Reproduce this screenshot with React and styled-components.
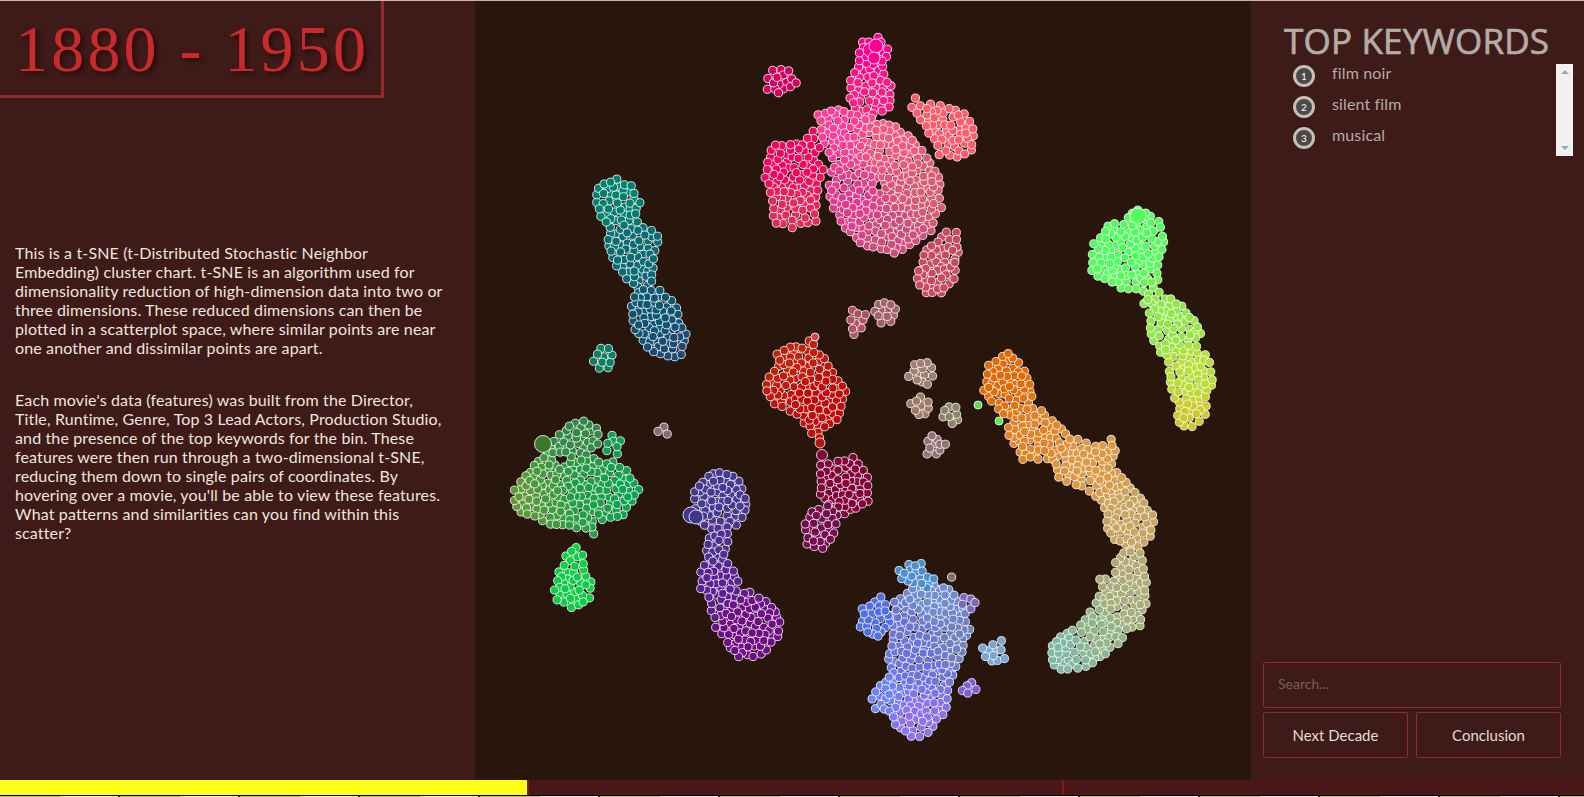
import styled, { createGlobalStyle } from "styled-components";

// polygons are in zoomed crop coords: real = origin + value / 3
const clusters = [
  { o: [750, 30], pts: [[340, 40], [380, 25], [410, 55], [400, 110], [405, 135], [420, 170], [415, 230], [350, 260], [305, 225], [300, 190], [305, 150], [325, 90]], colors: [[370, 60, "#ff0090"], [350, 200, "#f81f85"]] },
  { o: [750, 30], pts: [[65, 120], [115, 125], [135, 160], [85, 188], [55, 178], [55, 150]], colors: [[90, 150, "#d2005f"]] },
  { o: [750, 30], pts: [[205, 255], [260, 235], [320, 255], [420, 285], [470, 315], [530, 380], [565, 440], [570, 530], [540, 600], [500, 635], [430, 665], [350, 650], [290, 590], [240, 520], [235, 470], [255, 410], [225, 340]], colors: [[260, 300, "#ff3a98"], [420, 350, "#f25a80"], [520, 480, "#d95c70"], [300, 500, "#e2388f"], [420, 610, "#cf4c7c"]], hole: [385, 462, 4] },
  { o: [750, 30], pts: [[75, 345], [160, 340], [185, 305], [205, 350], [190, 390], [215, 420], [200, 480], [195, 570], [130, 590], [75, 580], [60, 490], [50, 440], [60, 380]], colors: [[110, 400, "#f5005f"], [120, 550, "#e42a5c"]] },
  { o: [750, 30], pts: [[495, 205], [515, 225], [570, 225], [640, 255], [670, 300], [660, 360], [620, 380], [570, 370], [540, 310], [510, 270], [490, 230]], colors: [[590, 300, "#ff5a6c"]] },
  { o: [750, 30], pts: [[590, 605], [615, 610], [625, 670], [585, 720], [515, 720], [530, 660]], colors: [[560, 670, "#c94a60"]] },
  { o: [750, 30], pts: [[505, 720], [585, 720], [612, 700], [615, 745], [570, 790], [525, 790], [505, 765]], colors: [[560, 750, "#cb4a60"]] },

  { o: [580, 170], pts: [[70, 40], [110, 30], [150, 50], [180, 95], [170, 130], [170, 160], [215, 185], [235, 200], [225, 240], [215, 290], [215, 330], [190, 355], [240, 365], [290, 410], [300, 460], [315, 490], [300, 550], [280, 560], [220, 545], [180, 500], [155, 450], [155, 410], [175, 360], [160, 340], [110, 290], [95, 260], [85, 230], [95, 170], [60, 135], [50, 100], [50, 70]], colors: [[100, 80, "#00826f"], [150, 250, "#0a6c72"], [230, 450, "#0a5575"], [280, 540, "#1c4a75"]] },
  { o: [580, 170], pts: [[65, 535], [85, 535], [95, 555], [80, 595], [55, 595], [45, 575]], colors: [[70, 565, "#0a8060"]] },

  { o: [500, 400], pts: [[45, 270], [65, 245], [100, 200], [130, 175], [165, 120], [210, 80], [250, 65], [290, 85], [295, 130], [260, 165], [300, 185], [340, 190], [380, 215], [415, 265], [395, 300], [370, 345], [330, 350], [280, 365], [278, 405], [262, 385], [230, 380], [150, 370], [100, 350], [60, 335], [45, 300]], colors: [[70, 290, "#5f9a38"], [150, 270, "#429a3c"], [240, 270, "#1aa044"], [390, 270, "#0aa552"], [240, 110, "#2e8a45"]], hole: [185, 180, 8] },
  { o: [500, 400], pts: [[320, 130], [335, 110], [360, 125], [350, 160], [325, 155]], colors: [[340, 135, "#10a050"]] },
  { o: [500, 400], pts: [[195, 465], [230, 445], [245, 465], [250, 510], [270, 545], [265, 590], [240, 615], [210, 620], [175, 600], [165, 570], [175, 520], [190, 500]], colors: [[215, 540, "#0ccf45"]] },
  { o: [500, 400], pts: [[475, 97], [492, 83], [498, 105]], colors: [[490, 95, "#8c6a70"]] },
  { o: [500, 400], pts: [[625, 225], [660, 215], [700, 230], [725, 265], [735, 295], [735, 330], [710, 375], [680, 385], [685, 405], [680, 445], [670, 480], [700, 510], [710, 545], [690, 570], [750, 580], [800, 605], [835, 650], [835, 710], [780, 765], [720, 770], [680, 725], [650, 680], [635, 630], [630, 590], [605, 570], [600, 520], [620, 480], [620, 430], [635, 390], [600, 360], [585, 330], [580, 300], [595, 260]], colors: [[650, 300, "#453a95"], [640, 450, "#4f2f95"], [650, 530, "#5a2195"], [740, 680, "#700a85"]] },

  { o: [1070, 200], pts: [[110, 80], [160, 70], [205, 30], [265, 65], [285, 125], [265, 170], [260, 240], [250, 265], [300, 295], [350, 335], [385, 380], [390, 420], [360, 450], [410, 465], [430, 535], [410, 570], [410, 640], [370, 680], [340, 680], [320, 650], [325, 610], [300, 550], [295, 490], [305, 470], [275, 460], [245, 400], [240, 340], [225, 310], [240, 285], [200, 265], [150, 260], [100, 240], [70, 215], [65, 160], [75, 135], [100, 100]], colors: [[170, 150, "#4dff5c"], [300, 370, "#90e848"], [360, 520, "#b8df35"], [350, 650, "#cfc92c"]] },

  { o: [960, 340], pts: [[90, 75], [140, 40], [175, 70], [205, 110], [215, 170], [205, 205], [240, 215], [275, 245], [305, 270], [330, 295], [380, 310], [430, 320], [450, 295], [470, 330], [450, 370], [470, 400], [510, 440], [550, 490], [580, 525], [570, 590], [530, 620], [495, 615], [465, 595], [440, 570], [440, 520], [420, 480], [390, 450], [345, 430], [300, 410], [290, 370], [260, 355], [190, 355], [150, 290], [150, 260], [165, 235], [130, 220], [95, 185], [75, 155], [80, 100]], colors: [[130, 120, "#e26a05"], [220, 290, "#e08425"], [380, 370, "#dd9a45"], [510, 540, "#c9a55f"]] },
  { o: [960, 340], pts: [[490, 635], [540, 635], [555, 710], [555, 790], [540, 860], [500, 870], [470, 910], [400, 965], [350, 985], [300, 985], [275, 960], [270, 920], [340, 870], [380, 835], [420, 770], [465, 720], [465, 670]], colors: [[510, 660, "#b5a870"], [490, 780, "#a8b078"], [410, 860, "#90b585"], [310, 940, "#7fb8a5"]] },
  { o: [960, 340], pts: [[417, 720], [435, 720], [428, 740]], colors: [[425, 725, "#a8a878"]] },

  { o: [840, 550], pts: [[200, 130], [260, 100], [330, 120], [365, 170], [385, 235], [370, 290], [345, 350], [330, 400], [320, 470], [290, 510], [265, 550], [215, 560], [165, 520], [150, 480], [110, 475], [100, 450], [120, 410], [160, 370], [150, 330], [160, 250], [155, 200], [165, 160]], colors: [[270, 150, "#6f8fd0"], [200, 230, "#6a75d5"], [240, 340, "#6a70e0"], [350, 280, "#6f80c0"], [230, 500, "#8f70f0"], [120, 440, "#6c85f8"]] },
  { o: [840, 550], pts: [[70, 175], [120, 145], [140, 165], [150, 220], [110, 260], [65, 235]], colors: [[100, 200, "#4f6fe5"]] },
  { o: [840, 550], pts: [[205, 42], [245, 45], [240, 80], [285, 88], [265, 110], [220, 98], [185, 85], [180, 60]], colors: [[215, 70, "#4a8fd0"]] },
  { o: [840, 550], pts: [[332, 82], [348, 84]], colors: [[340, 83, "#8a6a78"]] },
  { o: [840, 550], pts: [[372, 145], [405, 155], [392, 172], [365, 160]], colors: [[385, 155, "#7a68c0"]] },
  { o: [840, 550], pts: [[432, 290], [480, 275], [490, 330], [455, 336], [435, 320]], colors: [[460, 305, "#7aa5d0"]] },
  { o: [840, 550], pts: [[395, 395], [405, 415], [385, 432], [365, 418]], colors: [[385, 415, "#7a5fd5"]] },

  { o: [750, 290], pts: [[85, 195], [135, 165], [175, 180], [178, 150], [195, 185], [225, 210], [250, 250], [285, 305], [270, 350], [260, 385], [220, 410], [207, 440], [170, 420], [160, 385], [120, 360], [70, 345], [62, 320], [48, 280], [70, 245], [85, 225]], colors: [[120, 210, "#c4200a"], [200, 320, "#c00a0a"]] },
  { o: [750, 290], pts: [[210, 530], [260, 515], [310, 505], [355, 560], [350, 630], [320, 655], [285, 670], [240, 640], [210, 610]], colors: [[280, 590, "#85003a"]] },
  { o: [750, 290], pts: [[185, 665], [230, 650], [265, 675], [255, 730], [215, 778], [170, 760], [170, 700]], colors: [[210, 710, "#780a50"]] },
  { o: [750, 290], pts: [[308, 65], [345, 70], [335, 115], [315, 132], [298, 120]], colors: [[320, 95, "#b05060"]] },
  { o: [750, 290], pts: [[385, 42], [425, 42], [437, 60], [418, 92], [395, 95], [377, 62]], colors: [[405, 65, "#a5606a"]] },
  { o: [750, 290], pts: [[490, 222], [530, 214], [552, 255], [530, 282], [478, 262]], colors: [[510, 250, "#a07f70"]] },
  { o: [750, 290], pts: [[510, 325], [538, 332], [528, 372], [505, 376], [484, 345]], colors: [[510, 350, "#a07a62"]] },
  { o: [750, 290], pts: [[597, 347], [620, 352], [626, 388], [610, 398], [575, 383]], colors: [[600, 375, "#8c8468"]] },
  { o: [750, 290], pts: [[546, 442], [582, 464], [560, 492], [532, 488], [530, 455]], colors: [[550, 465, "#93707a"]] },
];

// single marks that stand out from the clusters
const extras = [
  { x: 870, y: 50, r: 7, c: "#ff0090" },
  { x: 876, y: 46, r: 7, c: "#ff0090" },
  { x: 874, y: 58, r: 6, c: "#ff0090" },
  { x: 1138, y: 216, r: 8, c: "#50ff5e" },
  { x: 543, y: 444, r: 8.5, c: "#3a7a2a" },
  { x: 691, y: 515, r: 8, c: "#40358f" },
  { x: 696, y: 517, r: 7, c: "#40358f" },
  { x: 815, y: 337, r: 4, c: "#d84060" },
  { x: 820, y: 443, r: 5, c: "#b81510" },
  { x: 822, y: 455, r: 5.5, c: "#80003c" },
  { x: 978, y: 405, r: 4, c: "#5fdc55" },
  { x: 999, y: 421, r: 4, c: "#52ef52" },
];

const toRgb = (hex) => [1, 3, 5].map((i) => parseInt(hex.slice(i, i + 2), 16));

const mulberry = (seed) => () => {
  seed |= 0;
  seed = (seed + 0x6d2b79f5) | 0;
  let t = Math.imul(seed ^ (seed >>> 15), 1 | seed);
  t = (t + Math.imul(t ^ (t >>> 7), 61 | t)) ^ t;
  return ((t ^ (t >>> 14)) >>> 0) / 4294967296;
};

const inside = (x, y, poly) => {
  let hit = false;
  for (let i = 0, j = poly.length - 1; i < poly.length; j = i++) {
    const [xi, yi] = poly[i];
    const [xj, yj] = poly[j];
    if (yi > y !== yj > y && x < ((xj - xi) * (y - yi)) / (yj - yi) + xi) hit = !hit;
  }
  return hit;
};

const colorAt = (x, y, anchors) => {
  let total = 0;
  const sum = [0, 0, 0];
  anchors.forEach(([ax, ay, rgb]) => {
    const w = 1 / ((x - ax) ** 2 + (y - ay) ** 2 + 4) ** 1.5;
    total += w;
    rgb.forEach((v, i) => (sum[i] += v * w));
  });
  return `rgb(${sum.map((v) => Math.round(v / total)).join(",")})`;
};

const buildDots = () => {
  const rand = mulberry(1950);
  const dots = [];
  clusters.forEach((cl) => {
    const [ox, oy] = cl.o;
    const real = ([x, y]) => [ox + x / 3, oy + y / 3];
    const poly = cl.pts.map(real);
    const anchors = cl.colors.map(([x, y, c]) => [...real([x, y]), toRgb(c)]);
    const hole = cl.hole && [...real(cl.hole), cl.hole[2] / 3 + 4];
    const placed = [];
    const clear = (x, y, min) => placed.every((p) => (p[0] - x) ** 2 + (p[1] - y) ** 2 >= min * min);

    // outline first, jittered so the edge stays scalloped and not straight
    poly.forEach(([x, y], i) => {
      const [nx, ny] = poly[(i + 1) % poly.length];
      const steps = Math.max(1, Math.round(Math.hypot(nx - x, ny - y) / 7.5));
      for (let s = 0; s < steps; s++) {
        const px = x + ((nx - x) * s) / steps + (rand() - 0.5) * 3;
        const py = y + ((ny - y) * s) / steps + (rand() - 0.5) * 3;
        if (clear(px, py, 5.2)) placed.push([px, py]);
      }
    });

    const xs = poly.map((p) => p[0]);
    const ys = poly.map((p) => p[1]);
    const [x0, x1, y0, y1] = [Math.min(...xs), Math.max(...xs), Math.min(...ys), Math.max(...ys)];
    const tries = (x1 - x0) * (y1 - y0) * 1.6;
    for (let t = 0; t < tries; t++) {
      const x = x0 + rand() * (x1 - x0);
      const y = y0 + rand() * (y1 - y0);
      if (!inside(x, y, poly) || !clear(x, y, 5.4)) continue;
      if (hole && Math.hypot(x - hole[0], y - hole[1]) < hole[2]) continue;
      placed.push([x, y]);
    }

    placed
      .map((p) => [p, rand()])
      .sort((a, b) => a[1] - b[1])
      .forEach(([[x, y]]) => dots.push({ x, y, r: 4.1, c: colorAt(x, y, anchors) }));
  });
  return [...dots, ...extras];
};

const dots = buildDots();

const keywords = ["film noir", "silent film", "musical"];

function App() {
  return (
    <Page>
      <GlobalStyle />
      <TopLine />
      <Main>
        <LeftPanel>
          <TitleBox>
            <Title>1880 - 1950</Title>
          </TitleBox>
          <Intro>
            <Paragraph>
              This is a t-SNE (t-Distributed Stochastic Neighbor
              <br />
              Embedding) cluster chart. t-SNE is an algorithm used for
              <br />
              dimensionality reduction of high-dimension data into two or
              <br />
              three dimensions. These reduced dimensions can then be
              <br />
              plotted in a scatterplot space, where similar points are near
              <br />
              one another and dissimilar points are apart.
            </Paragraph>
            <Paragraph>
              Each movie's data (features) was built from the Director,
              <br />
              Title, Runtime, Genre, Top 3 Lead Actors, Production Studio,
              <br />
              and the presence of the top keywords for the bin. These
              <br />
              features were then run through a two-dimensional t-SNE,
              <br />
              reducing them down to single pairs of coordinates. By
              <br />
              hovering over a movie, you'll be able to view these features.
              <br />
              What patterns and similarities can you find within this
              <br />
              scatter?
            </Paragraph>
          </Intro>
        </LeftPanel>
        <ChartPanel>
          <Scatter viewBox="475 1 776 779">
            {dots.map((d, i) => (
              <circle key={i} cx={d.x} cy={d.y} r={d.r} fill={d.c} stroke="#fff" strokeOpacity="0.82" strokeWidth="1" />
            ))}
          </Scatter>
        </ChartPanel>
        <RightPanel>
          <Heading>TOP KEYWORDS</Heading>
          <KeywordArea>
            <KeywordList>
              {keywords.map((word, i) => (
                <KeywordRow key={word}>
                  <Badge>{i + 1}</Badge>
                  <Keyword>{word}</Keyword>
                </KeywordRow>
              ))}
            </KeywordList>
            <ScrollTrack>
              <ArrowUp />
              <ArrowDown />
            </ScrollTrack>
          </KeywordArea>
          <Controls>
            <SearchInput placeholder="Search..." />
            <ButtonRow>
              <ActionButton>Next Decade</ActionButton>
              <ActionButton>Conclusion</ActionButton>
            </ButtonRow>
          </Controls>
        </RightPanel>
      </Main>
      <Progress>
        <ProgressFill />
        <ProgressSegment />
        <ProgressSegment $last />
      </Progress>
      <BottomStrip />
    </Page>
  );
}

export default App;

const GlobalStyle = createGlobalStyle`
  html, body {
    margin: 0;
    padding: 0;
    background: #000;
    overflow: hidden;
  }
`;

const Page = styled.div`
  width: 1584px;
  height: 797px;
  display: flex;
  flex-direction: column;
  overflow: hidden;
  font-family: "Lato", "Liberation Sans", sans-serif;
`;

const TopLine = styled.div`
  height: 1px;
  background: #bdb8b4;
`;

const Main = styled.div`
  height: 779px;
  display: flex;
`;

const LeftPanel = styled.div`
  width: 475px;
  background: #3e1a18;
  display: flex;
  flex-direction: column;
`;

const TitleBox = styled.div`
  width: 384px;
  height: 97px;
  box-sizing: border-box;
  border-right: 3px solid #8f2b2d;
  border-bottom: 3px solid #8f2b2d;
  padding: 13px 0 0 15px;
`;

const Title = styled.h1`
  margin: 0;
  font-family: "Liberation Serif", serif;
  font-weight: 400;
  font-size: 66px;
  line-height: 70px;
  letter-spacing: 3.2px;
  white-space: nowrap;
  color: #c92a2c;
  text-shadow: 3px 3px 4px rgba(0, 0, 0, 0.45);
`;

const Intro = styled.div`
  margin-top: 145px;
  padding-left: 15px;
  display: flex;
  flex-direction: column;
  gap: 33px;
`;

const Paragraph = styled.p`
  margin: 0;
  font-size: 16px;
  line-height: 19px;
  letter-spacing: 0.14px;
  color: #efe6dc;
  white-space: nowrap;
`;

const ChartPanel = styled.div`
  width: 776px;
  background: #28160c;
`;

const Scatter = styled.svg`
  display: block;
  width: 776px;
  height: 779px;
`;

const RightPanel = styled.div`
  flex: 1;
  background: #3e1a18;
  display: flex;
  flex-direction: column;
`;

const Heading = styled.h2`
  margin: 18px 0 0;
  padding-left: 33px;
  font-family: "Open Sans", sans-serif;
  font-weight: 400;
  font-size: 35px;
  line-height: 44px;
  letter-spacing: 0.2px;
  -webkit-text-stroke: 0.7px #b5aca8;
  color: #b5aca8;
  white-space: nowrap;
`;

const KeywordArea = styled.div`
  margin-top: 1px;
  height: 92px;
  display: flex;
  justify-content: space-between;
  padding: 0 11px 0 42px;
`;

const KeywordList = styled.ul`
  margin: 0;
  padding: 0;
  list-style: none;
  display: flex;
  flex-direction: column;
  gap: 9px;
`;

const KeywordRow = styled.li`
  height: 22px;
  display: flex;
  gap: 17px;
`;

const Badge = styled.span`
  width: 22px;
  height: 22px;
  box-sizing: border-box;
  margin-top: 1px;
  border: 3px solid #c5bfb8;
  border-radius: 50%;
  background: #4a4a4a;
  color: #fff;
  font-size: 10px;
  display: flex;
  align-items: center;
  justify-content: center;
`;

const Keyword = styled.span`
  font-size: 16px;
  line-height: 18px;
  letter-spacing: 0.14px;
  color: #b5aca8;
`;

const ScrollTrack = styled.div`
  width: 17px;
  height: 92px;
  background: #f1f1f1;
  display: flex;
  flex-direction: column;
  justify-content: space-between;
  align-items: center;
  padding: 6px 0;
  box-sizing: border-box;
`;

const ArrowUp = styled.span`
  border-left: 4px solid transparent;
  border-right: 4px solid transparent;
  border-bottom: 4px solid #a3a3a3;
`;

const ArrowDown = styled.span`
  border-left: 4px solid transparent;
  border-right: 4px solid transparent;
  border-top: 4px solid #a3a3a3;
`;

const Controls = styled.div`
  margin-top: auto;
  margin-bottom: 22px;
  padding: 0 23px 0 12px;
  display: flex;
  flex-direction: column;
  gap: 4px;
`;

const SearchInput = styled.input`
  height: 46px;
  box-sizing: border-box;
  padding: 0 14px 3px;
  background: transparent;
  border: 1px solid #8f2b2d;
  border-radius: 2px;
  outline: none;
  font-family: inherit;
  font-size: 14px;
  color: #ddd;

  &::placeholder {
    color: #75605e;
  }
`;

const ButtonRow = styled.div`
  display: flex;
  gap: 8px;
`;

const ActionButton = styled.button`
  flex: 1;
  height: 46px;
  padding-bottom: 2px;
  background: transparent;
  border: 1px solid #8f2b2d;
  border-radius: 2px;
  font-family: inherit;
  font-size: 15px;
  color: #e2dcd8;
`;

const Progress = styled.div`
  height: 15px;
  display: flex;
  background: #4a1616;
`;

const ProgressFill = styled.div`
  width: 527px;
  background: #ffff1a;
`;

const ProgressSegment = styled.div`
  width: ${(p) => (p.$last ? "auto" : "535px")};
  flex: ${(p) => (p.$last ? 1 : "none")};
  border-left: 2px solid #7c1c1e;
  box-sizing: border-box;
`;

const BottomStrip = styled.div`
  margin-top: 1px;
  height: 1px;
  background: repeating-linear-gradient(90deg, #b8b8a0 0 60px, #e8e8e8 60px 118px, #222 118px 120px);
`;
